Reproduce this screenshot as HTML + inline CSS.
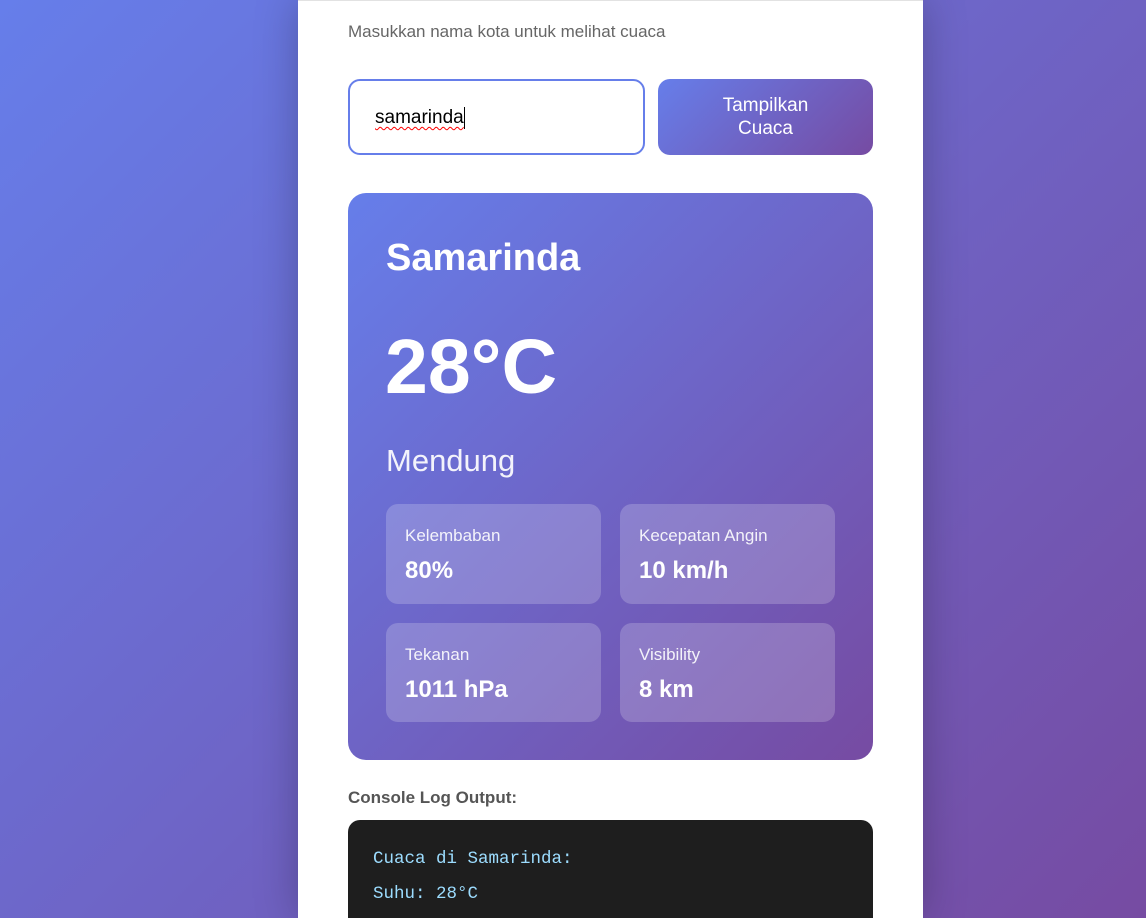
<!DOCTYPE html>
<html><head><meta charset="utf-8"><style>
html,body{margin:0;padding:0;width:1146px;height:918px;overflow:hidden}
body{background:linear-gradient(135deg,#667eea 0%,#764ba2 100%);font-family:"Liberation Sans",sans-serif;position:relative}
.wrap{position:absolute;left:298px;top:0;width:625px;height:918px;background:#fff;box-shadow:0 0 40px rgba(0,0,0,.25);border-top:1px solid #e2e2e2;box-sizing:border-box}
.sub{position:absolute;left:50px;top:21px;font-size:17px;color:#666}
.inp{position:absolute;left:50px;top:78px;width:297px;border:2px solid #667eea;border-radius:12px;box-sizing:border-box;height:76px}
.inp span{position:absolute;left:25px;top:26px;font-size:19px;color:#000;text-decoration:underline wavy red;text-decoration-thickness:1px;text-underline-offset:3px;border-right:1px solid #000}
.btn{position:absolute;left:360px;top:78px;width:215px;height:76px;border-radius:12px;background:linear-gradient(135deg,#667eea,#764ba2);color:#fff;font-size:19px;text-align:center;line-height:23px;box-sizing:border-box;padding-top:15px}
.card{position:absolute;left:50px;top:192px;width:525px;height:567px;border-radius:18px;background:linear-gradient(135deg,#667eea 0%,#764ba2 100%);color:#fff}
.city{position:absolute;left:38px;top:44px;font-size:38px;font-weight:bold}
.temp{position:absolute;left:37px;top:130px;font-size:77px;font-weight:bold}
.desc{position:absolute;left:38px;top:250px;font-size:31px;opacity:.92}
.box{position:absolute;width:215px;height:100px;border-radius:12px;background:rgba(255,255,255,.2)}
.box .l{position:absolute;left:19px;top:22px;font-size:17px;opacity:.9}
.box .v{position:absolute;left:19px;top:53px;font-size:24px;font-weight:bold}
.cl{position:absolute;left:50px;top:787px;font-size:17px;font-weight:bold;color:#555}
.con{position:absolute;left:50px;top:819px;width:525px;height:120px;border-radius:12px;background:#1e1e1e;font-family:"Liberation Mono",monospace;font-size:17.5px;color:#9cdcfe}
.con div{position:absolute;left:25px}
</style></head><body>
<div class="wrap">
<div class="sub">Masukkan nama kota untuk melihat cuaca</div>
<div class="inp"><span>samarinda</span></div>
<div class="btn">Tampilkan<br>Cuaca</div>
<div class="card">
<div class="city">Samarinda</div>
<div class="temp">28°C</div>
<div class="desc">Mendung</div>
<div class="box" style="left:38px;top:311px"><div class="l">Kelembaban</div><div class="v">80%</div></div>
<div class="box" style="left:272px;top:311px"><div class="l">Kecepatan Angin</div><div class="v">10 km/h</div></div>
<div class="box" style="left:38px;top:430px;height:99px"><div class="l">Tekanan</div><div class="v">1011 hPa</div></div>
<div class="box" style="left:272px;top:430px;height:99px"><div class="l">Visibility</div><div class="v">8 km</div></div>
</div>
<div class="cl">Console Log Output:</div>
<div class="con"><div style="top:29px">Cuaca di Samarinda:</div><div style="top:64px">Suhu: 28°C</div></div>
</div>
</body></html>
